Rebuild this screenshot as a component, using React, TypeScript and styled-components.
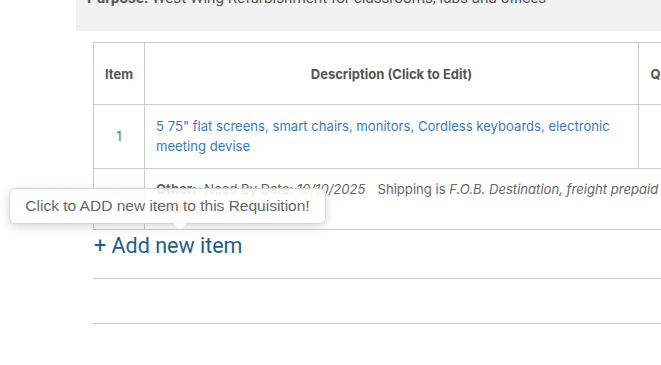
import React from "react";
import styled, { createGlobalStyle } from "styled-components";

const GlobalStyle = createGlobalStyle`
  html, body {
    margin: 0;
    padding: 0;
    background: #fff;
    overflow: hidden;
  }
`;

const Page = styled.div`
  width: 661px;
  height: 365px;
  overflow: hidden;
  margin-top: -22px;
  font-family: Inter, "Liberation Sans", sans-serif;
`;

const PurposePanel = styled.div`
  margin-left: 76px;
  width: 700px;
  padding: 10px 11px 23px;
  background: #f1f1f1;
  font-family: Roboto, "Liberation Sans", sans-serif;
  font-size: 15.2px;
  line-height: 20px;
  color: #555;
  white-space: nowrap;
`;

const Content = styled.div`
  margin-left: 93px;
  padding-top: 11px;
  width: 900px;
`;

const ItemsTable = styled.table`
  border-collapse: collapse;
  width: 800px;
  table-layout: fixed;
`;

const HeadCell = styled.th<{ $w?: number }>`
  width: ${(p) => (p.$w ? `${p.$w}px` : "auto")};
  border: 1px solid #ccc;
  height: 61px;
  padding: 0;
  font-size: 13px;
  font-weight: 700;
  color: #555;
  text-align: center;
  white-space: nowrap;
  overflow: hidden;
`;

const Cell = styled.td<{ $center?: boolean }>`
  border: 1px solid #ccc;
  padding: 12px 11px;
  font-size: 13.1px;
  line-height: 19.5px;
  color: #3a7bbf;
  text-align: ${(p) => (p.$center ? "center" : "left")};
  vertical-align: middle;
`;

const NoteCell = styled.td`
  border: 1px solid #ccc;
  border-right: none;
  padding: 11px 11px 11px;
  font-size: 13.1px;
  line-height: 19px;
  color: #666;
  vertical-align: top;
  white-space: nowrap;
`;

const Label = styled.b`
  font-weight: 700;
  margin-right: 4px;
`;

const Em = styled.i`
  font-style: italic;
`;

const Spacer = styled.span`
  display: inline-block;
  width: 12px;
`;

const AddRow = styled.div`
  position: relative;
  height: 48px;
  border-bottom: 1px solid #ccc;
  display: flex;
  align-items: center;
`;

const AddLink = styled.a`
  font-family: Roboto, "Liberation Sans", sans-serif;
  font-size: 21.5px;
  color: #1f5d8c;
  text-decoration: none;
  cursor: pointer;
  margin-left: 1px;
  margin-top: -18px;
`;

const Tooltip = styled.div`
  position: absolute;
  left: -84px;
  top: -42px;
  width: 315px;
  height: 34px;
  border: 1px solid #d6d6d6;
  border-radius: 6px;
  background: rgba(255, 255, 255, 0.86);
  box-shadow: 0 3px 10px rgba(0, 0, 0, 0.15);
  display: flex;
  align-items: center;
  justify-content: center;
  font-family: "Liberation Sans", Arial, sans-serif;
  font-size: 15.5px;
  color: #666;
  white-space: nowrap;

  &::after {
    content: "";
    position: absolute;
    left: 163px;
    bottom: -7px;
    border-left: 7px solid transparent;
    border-right: 7px solid transparent;
    border-top: 7px solid rgba(255, 255, 255, 0.95);
  }
`;

const BlankRow = styled.div`
  height: 44px;
  border-bottom: 1px solid #ccc;
`;

export default function App() {
  return (
    <>
      <GlobalStyle />
      <Page>
        <PurposePanel>
          <strong>Purpose:</strong> West Wing Refurbishment for classrooms, labs and offices
        </PurposePanel>
        <Content>
          <ItemsTable>
            <thead>
              <tr>
                <HeadCell $w={50}>Item</HeadCell>
                <HeadCell $w={493}>Description (Click to Edit)</HeadCell>
                <HeadCell $w={78}>Quantity</HeadCell>
                <HeadCell $w={70}>Unit</HeadCell>
                <HeadCell>Price</HeadCell>
              </tr>
            </thead>
            <tbody>
              <tr>
                <Cell $center>1</Cell>
                <Cell>
                  5 75" flat screens, smart chairs, monitors, Cordless keyboards, electronic meeting devise
                </Cell>
                <Cell $center>5</Cell>
                <Cell $center>ea</Cell>
                <Cell></Cell>
              </tr>
              <tr>
                <Cell></Cell>
                <NoteCell colSpan={4}>
                  <Label>Other:</Label> Need By Date: <Em>10/10/2025</Em>
                  <Spacer />
                  Shipping is <Em>F.O.B. Destination, freight prepaid</Em>
                  <br />
                  Rush
                </NoteCell>
              </tr>
            </tbody>
          </ItemsTable>
          <AddRow>
            <AddLink>+ Add new item</AddLink>
            <Tooltip>Click to ADD new item to this Requisition!</Tooltip>
          </AddRow>
          <BlankRow />
        </Content>
      </Page>
    </>
  );
}
